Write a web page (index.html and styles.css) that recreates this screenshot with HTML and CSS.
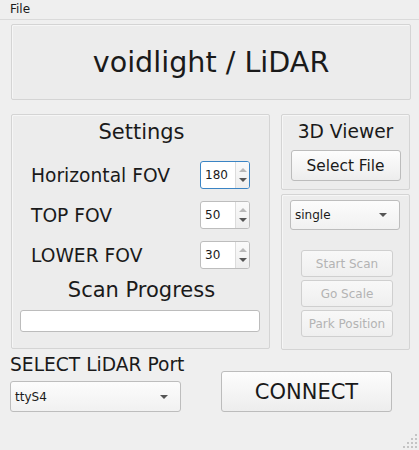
FILE: index.html
```html
<!DOCTYPE html>
<html>
<head>
<meta charset="utf-8">
<link rel="stylesheet" href="styles.css">
</head>
<body>
<div class="menubar"><span class="menu-item">File</span></div>
<div class="main">
  <div class="frame title-frame">voidlight / LiDAR</div>
  <div class="row">
    <div class="frame settings">
      <div class="heading">Settings</div>
      <div class="field first">
        <span class="label">Horizontal FOV</span>
        <div class="spin focused"><span class="val">180</span><span class="arrows"><i class="up"></i><i class="down"></i></span></div>
      </div>
      <div class="field">
        <span class="label">TOP FOV</span>
        <div class="spin"><span class="val">50</span><span class="arrows"><i class="up"></i><i class="down"></i></span></div>
      </div>
      <div class="field">
        <span class="label">LOWER FOV</span>
        <div class="spin"><span class="val">30</span><span class="arrows"><i class="up"></i><i class="down"></i></span></div>
      </div>
      <div class="heading progress-title">Scan Progress</div>
      <div class="progress"></div>
    </div>
    <div class="side">
      <div class="frame viewer">
        <div class="subheading">3D Viewer</div>
        <button class="btn select-file">Select File</button>
      </div>
      <div class="frame control">
        <div class="combo mode"><span>single</span><i class="caret"></i></div>
        <div class="actions">
          <button class="btn small" disabled>Start Scan</button>
          <button class="btn small" disabled>Go Scale</button>
          <button class="btn small" disabled>Park Position</button>
        </div>
      </div>
    </div>
  </div>
</div>
<div class="bottom">
  <div class="port">
    <div class="port-label">SELECT LiDAR Port</div>
    <div class="combo port-combo"><span>ttyS4</span><i class="caret"></i></div>
  </div>
  <button class="btn connect">CONNECT</button>
</div>
<svg class="grip" width="16" height="16" viewBox="0 0 16 16">
  <g fill="#c4c4c4">
    <rect x="13" y="1" width="2" height="2"/>
    <rect x="9" y="5" width="2" height="2"/><rect x="13" y="5" width="2" height="2"/>
    <rect x="5" y="9" width="2" height="2"/><rect x="9" y="9" width="2" height="2"/><rect x="13" y="9" width="2" height="2"/>
    <rect x="1" y="13" width="2" height="2"/><rect x="5" y="13" width="2" height="2"/><rect x="9" y="13" width="2" height="2"/><rect x="13" y="13" width="2" height="2"/>
  </g>
</svg>
</body>
</html>
```
FILE: styles.css
```css
* { box-sizing: border-box; }
html, body { margin: 0; padding: 0; }
body {
  width: 419px;
  height: 450px;
  background: #efefef;
  font-family: "DejaVu Sans", sans-serif;
  color: #1a1a1a;
  position: relative;
  overflow: hidden;
}
.menubar {
  height: 20px;
  border-bottom: 1px solid #dadada;
  font-size: 12px;
  line-height: 19px;
  padding-left: 10px;
}
.main {
  padding: 4px 0 0 11px;
}
.frame {
  background: #ececec;
  border: 1px solid #d4d4d4;
  border-radius: 2px;
  box-shadow: inset 1px 1px 0 #f6f6f6;
}
.title-frame {
  width: 400px;
  height: 76px;
  display: flex;
  align-items: center;
  justify-content: center;
  font-size: 28.6px;
  padding-bottom: 1px;
}
.row {
  display: flex;
  gap: 11px;
  margin-top: 14px;
}
.settings {
  width: 259px;
  height: 235px;
  display: flex;
  flex-direction: column;
}
.heading {
  text-align: center;
  font-size: 21px;
  line-height: 32px;
  padding-left: 2px;
  margin-top: 1px;
}
.field {
  display: flex;
  align-items: center;
  justify-content: space-between;
  height: 28px;
  padding: 0 19px 0 19px;
  margin-top: 12px;
}
.field.first { margin-top: 13px; }
.label { font-size: 18.67px; margin-top: 1px; }
.spin {
  width: 50px;
  height: 28px;
  background: #fff;
  border: 1px solid #bdbdbd;
  border-radius: 3px;
  display: flex;
  font-size: 12px;
}
.spin.focused { border-color: #3a84c4; }
.spin .val {
  flex: 1;
  padding-left: 4px;
  line-height: 27px;
}
.arrows {
  width: 14px;
  border-left: 1px solid #dcdcdc;
  background: linear-gradient(#fafafa, #eeeeee);
  display: flex;
  flex-direction: column;
  align-items: center;
  justify-content: center;
  gap: 6px;
  border-radius: 0 2px 2px 0;
}
.arrows i { width: 0; height: 0; border-left: 4px solid transparent; border-right: 4px solid transparent; }
.arrows .up { border-bottom: 4px solid #b8b8b8; }
.arrows .down { border-top: 4px solid #555; }
.progress-title { line-height: 28px; margin-top: 7px; }
.progress {
  width: 240px;
  height: 22px;
  margin: 6px 0 0 8px;
  background: #fff;
  border: 1px solid #bcbcbc;
  border-radius: 3px;
}
.side {
  width: 129px;
  display: flex;
  flex-direction: column;
  gap: 4px;
}
.viewer {
  height: 76px;
  display: flex;
  flex-direction: column;
  align-items: center;
}
.subheading {
  font-size: 18.67px;
  line-height: 28px;
  margin-top: 3px;
}
.btn {
  font-family: "DejaVu Sans", sans-serif;
  color: #1a1a1a;
  background: linear-gradient(#fdfdfd, #ededed);
  border: 1px solid #bcbcbc;
  border-radius: 3px;
  padding: 0;
}
.select-file {
  width: 110px;
  height: 31px;
  margin-top: 4px;
  font-size: 15.4px;
}
.control {
  height: 156px;
  padding: 5px 0 0 8px;
}
.combo {
  display: flex;
  align-items: center;
  justify-content: space-between;
  background: linear-gradient(#fcfcfc, #f1f1f1);
  border: 1px solid #bdbdbd;
  border-radius: 3px;
  font-size: 12px;
  padding: 0 12px 0 4px;
}
.mode { width: 110px; height: 30px; }
.caret {
  width: 0; height: 0;
  border-left: 4px solid transparent;
  border-right: 4px solid transparent;
  border-top: 4px solid #555;
}
.actions {
  display: flex;
  flex-direction: column;
  gap: 3px;
  margin: 20px 0 0 11px;
}
.btn.small {
  width: 92px;
  height: 27px;
  font-size: 12px;
}
.btn[disabled] {
  color: #b3b3b3;
  border-color: #cfcfcf;
  background: linear-gradient(#f8f8f8, #efefef);
}
.bottom {
  display: flex;
  padding-left: 10px;
  margin-top: 1px;
  gap: 40px;
}
.port { width: 171px; }
.port-label { font-size: 18.67px; line-height: 28px; white-space: nowrap; }
.port-combo { height: 31px; margin-top: 2px; }
.connect {
  width: 171px;
  height: 41px;
  margin-top: 20px;
  font-size: 21px;
}
.grip {
  position: absolute;
  right: 1px;
  bottom: 1px;
}
```
